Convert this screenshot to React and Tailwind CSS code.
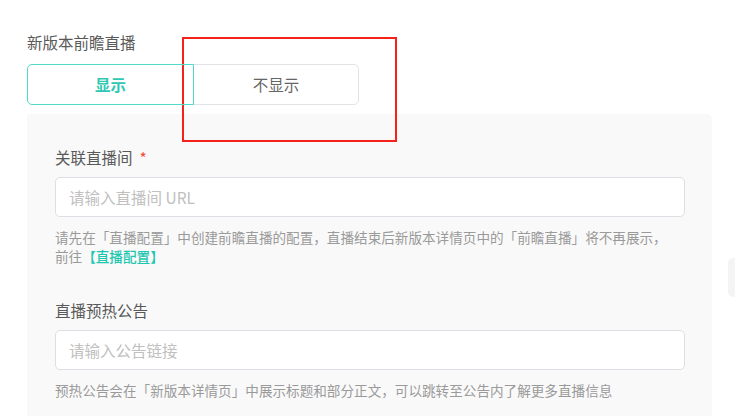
import React, { useState } from 'react';

const font = { fontFamily: '"Noto Sans CJK SC", "Noto Sans", sans-serif' };

function Field({ label, required, placeholder, children }) {
  return (
    <div>
      <div className="text-[15.5px] leading-[22px] text-[#595959] mb-[9px]">
        {label}
        {required && <span className="text-[#f5483b] ml-[7px]">*</span>}
      </div>
      <input
        className="w-full h-[40px] bg-white border border-[#dcdfe3] rounded-[5px] px-[13px] text-[15.5px] text-[#333] placeholder:text-[#c0c0c0] outline-none"
        placeholder={placeholder}
        style={font}
      />
      <div className="mt-[11px] text-[13.6px] leading-[19px] text-[#9a9a9a]">{children}</div>
    </div>
  );
}

export default function App() {
  const [show, setShow] = useState(true);

  return (
    <div className="relative w-[735px] h-[416px] overflow-hidden bg-white" style={font}>
      <div className="pl-[27px] pt-[31px] w-[712px]">
        <div className="text-[15.5px] leading-[22px] text-[#595959] mb-[11px]">新版本前瞻直播</div>

        <div className="flex w-[332px] h-[41px] text-[15.5px]">
          <button
            className={`relative z-10 w-[167px] rounded-l-[5px] border ${show ? 'border-[#4fd9c9] text-[#2fc8b2] font-semibold' : 'border-[#e1e3e6] text-[#666]'}`}
            onClick={() => setShow(true)}
          >
            显示
          </button>
          <button
            className={`-ml-px flex-1 rounded-r-[5px] border ${!show ? 'border-[#4fd9c9] text-[#2fc8b2] font-semibold' : 'border-[#e1e3e6] text-[#666]'}`}
            onClick={() => setShow(false)}
          >
            不显示
          </button>
        </div>

        <div className="mt-[9px] bg-[#f9f9f9] rounded-tr-[5px] pl-[28px] pr-[27px] pt-[32px] pb-[20px]">
          <Field label="关联直播间" required placeholder="请输入直播间 URL">
            <div>请先在「直播配置」中创建前瞻直播的配置，直播结束后新版本详情页中的「前瞻直播」将不再展示，</div>
            <div>
              前往<span className="text-[#1fc6b0] font-medium">【直播配置】</span>
            </div>
          </Field>

          <div className="mt-[33px]">
            <Field label="直播预热公告" placeholder="请输入公告链接">
              预热公告会在「新版本详情页」中展示标题和部分正文，可以跳转至公告内了解更多直播信息
            </Field>
          </div>
        </div>
      </div>

      {/* annotation box */}
      <div className="absolute left-[182px] top-[37px] w-[215px] h-[105px] border-2 border-[#f5221b] pointer-events-none" />

      {/* floating edge tab */}
      <div className="absolute left-[728px] top-[258px] w-[12px] h-[39px] bg-[#f4f4f5] rounded-l-[5px]" />
    </div>
  );
}
